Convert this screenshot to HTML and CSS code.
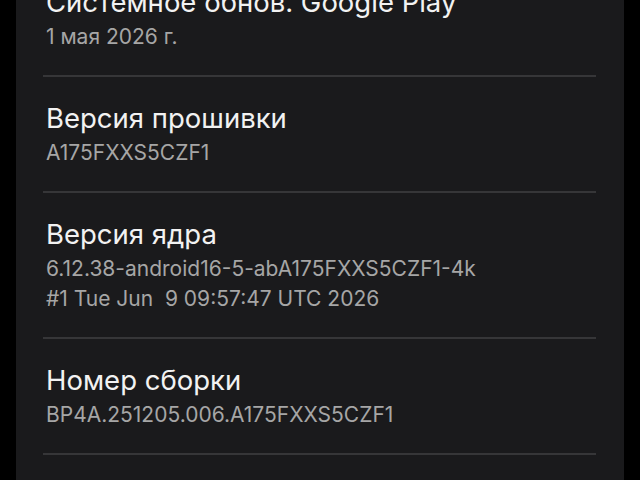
FILE: index.html
```html
<!DOCTYPE html>
<html lang="ru">
<head>
<meta charset="utf-8">
<title>Сведения о ПО</title>
<link rel="stylesheet" href="styles.css">
</head>
<body>
<main class="card">
  <section class="row">
    <div class="title">Системное обнов. Google Play</div>
    <div class="sub">1 мая 2026 г.</div>
  </section>
  <section class="row">
    <div class="title">Версия прошивки</div>
    <div class="sub">A175FXXS5CZF1</div>
  </section>
  <section class="row">
    <div class="title">Версия ядра</div>
    <div class="sub">6.12.38-android16-5-abA175FXXS5CZF1-4k</div>
    <div class="sub">#1 Tue Jun&nbsp; 9 09:57:47 UTC 2026</div>
  </section>
  <section class="row">
    <div class="title">Номер сборки</div>
    <div class="sub">BP4A.251205.006.A175FXXS5CZF1</div>
  </section>
  <div class="tail"></div>
</main>
</body>
</html>
```
FILE: styles.css
```css
html, body {
  margin: 0;
  padding: 0;
  background: #000;
  overflow: hidden;
  height: 480px;
}
body {
  font-family: Inter, Roboto, "Liberation Sans", sans-serif;
}
.card {
  display: block;
  margin: -39px 16px 0 16px;
  background: #1a1a1c;
  border-radius: 26px;
}
.row {
  margin: 0 28px 0 27px;
  padding: 25px 0 23px 0;
  border-bottom: 2px solid #363638;
}
.title {
  font-size: 27.5px;
  line-height: 32px;
  margin-bottom: 4px;
  padding-left: 3px;
  color: #f2f2f2;
}
.sub {
  font-size: 21px;
  line-height: 30px;
  padding-left: 3px;
  color: #a6a6a6;
  white-space: pre;
}
.tail {
  height: 80px;
}
```
